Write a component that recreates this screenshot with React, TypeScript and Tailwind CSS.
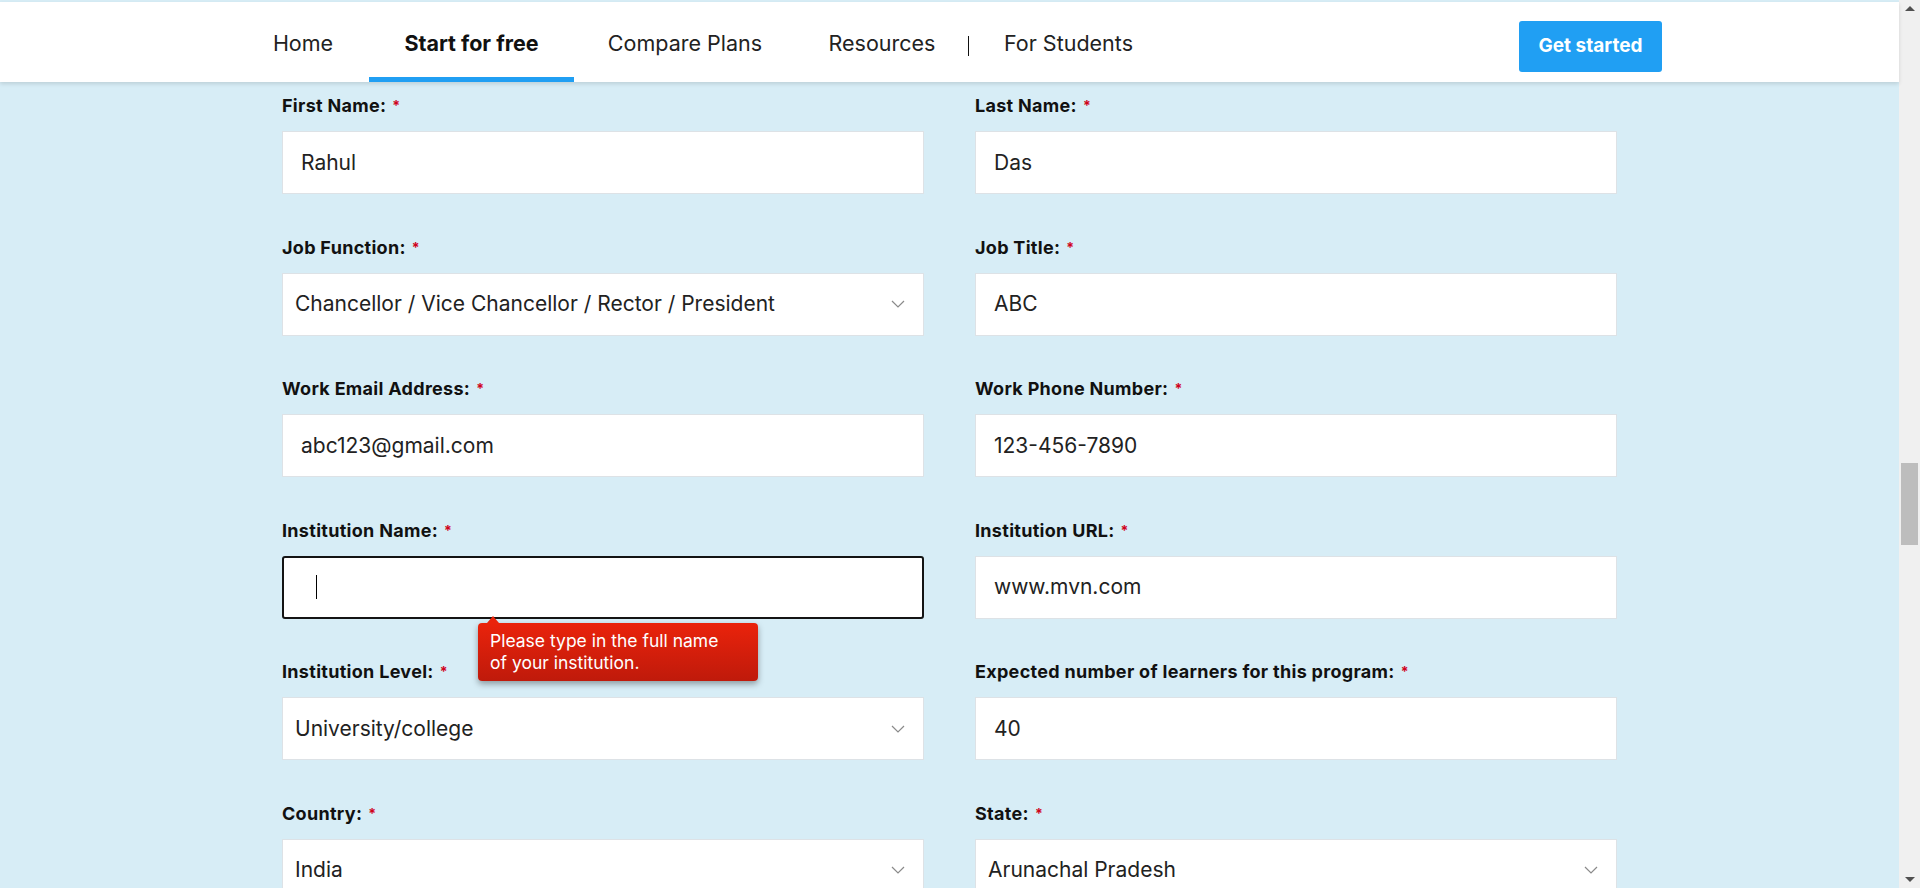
import React from "react";

const Chevron = () => (
  <svg width="14" height="8" viewBox="0 0 14 8" fill="none">
    <path d="M1 1l6 6 6-6" stroke="#8a8a8a" strokeWidth="1.2" />
  </svg>
);

function Label({ text }: { text: string }) {
  return (
    <div className="h-[24px] leading-[24px] text-[18px] tracking-[0.3px] font-bold text-[#111] mb-[13px] whitespace-nowrap">
      {text}
      <span className="text-[#d0021b] text-[14px] ml-[6px] align-[1px]">*</span>
    </div>
  );
}

function TextField({ label, value }: { label: string; value: string }) {
  return (
    <div className="mb-[41.5px]">
      <Label text={label} />
      <div className="h-[63px] bg-white border border-[#dde2e6] flex items-center pl-[18px] text-[21px] text-[#222]">
        {value}
      </div>
    </div>
  );
}

function SelectField({ label, value }: { label: string; value: string }) {
  return (
    <div className="mb-[41.5px]">
      <Label text={label} />
      <div className="h-[63px] bg-white border border-[#dde2e6] flex items-center justify-between pl-[12px] pr-[18px] text-[21px] text-[#222]">
        <span>{value}</span>
        <Chevron />
      </div>
    </div>
  );
}

function FocusedField({ label }: { label: string }) {
  return (
    <div className="mb-[41.5px]">
      <Label text={label} />
      <div className="relative h-[63px]">
        <div className="h-full bg-white border-2 border-[#141414] rounded-[3px] flex items-center">
          <div className="w-px h-[24px] bg-black ml-[32px]" />
        </div>
        <div className="absolute left-[196px] top-[67px] w-[280px] h-[58px] rounded-[4px] bg-linear-to-b from-[#ea230b] to-[#bf1a0b] shadow-[0_3px_6px_rgba(0,0,0,0.35)] text-white text-[17.5px] leading-[22px] pl-[12px] pt-[7px] z-10 whitespace-nowrap">
          <div className="absolute left-[9px] top-[-7px] w-0 h-0 border-l-[6px] border-r-[6px] border-b-[7px] border-l-transparent border-r-transparent border-b-[#ea230b]" />
          Please type in the full name
          <br />
          of your institution.
        </div>
      </div>
    </div>
  );
}

export default function App() {
  return (
    <div className="w-[1920px] h-[888px] overflow-hidden flex bg-[#d7edf6] font-['Inter','Noto_Sans',sans-serif]">
      <div className="flex-1 flex flex-col min-w-0">
        <div className="h-[2px] shrink-0" />
        <header className="h-[80px] shrink-0 bg-white flex px-[237px] shadow-[0_2px_4px_rgba(0,0,0,0.12)] relative z-20">
          <nav className="flex h-full text-[21.5px] text-[#222]">
            <a className="w-[132px] h-full flex items-center justify-center pt-[7px] border-b-[5px] border-transparent">Home</a>
            <a className="w-[205px] h-full flex items-center justify-center pt-[7px] border-b-[5px] border-[#209ff3] font-bold text-[#111]">Start for free</a>
            <a className="w-[222px] h-full flex items-center justify-center pt-[7px] border-b-[5px] border-transparent">Compare Plans</a>
            <a className="w-[172px] h-full flex items-center justify-center pt-[7px] border-b-[5px] border-transparent">Resources</a>
            <div className="w-px h-[20px] bg-[#111] self-center mt-[7px]" />
            <a className="w-[199px] h-full flex items-center justify-center pt-[7px] border-b-[5px] border-transparent">For Students</a>
          </nav>
          <button className="ml-auto mt-[19px] w-[143px] h-[51px] bg-[#209ff3] rounded-[3px] text-white font-bold text-[19px]">
            Get started
          </button>
        </header>
        <main className="w-[1335px] shrink-0 mx-auto grid grid-cols-2 gap-x-[51px] pt-[12px]">
          <TextField label="First Name:" value="Rahul" />
          <TextField label="Last Name:" value="Das" />
          <SelectField label="Job Function:" value="Chancellor / Vice Chancellor / Rector / President" />
          <TextField label="Job Title:" value="ABC" />
          <TextField label="Work Email Address:" value="abc123@gmail.com" />
          <TextField label="Work Phone Number:" value="123-456-7890" />
          <FocusedField label="Institution Name:" />
          <TextField label="Institution URL:" value="www.mvn.com" />
          <SelectField label="Institution Level:" value="University/college" />
          <TextField label="Expected number of learners for this program:" value="40" />
          <SelectField label="Country:" value="India" />
          <SelectField label="State:" value="Arunachal Pradesh" />
        </main>
      </div>
      <div className="w-[21px] h-full shrink-0 bg-[#f0f0f0] flex flex-col items-center">
        <div className="mt-[6px] w-0 h-0 border-l-[5px] border-r-[5px] border-b-[5px] border-l-transparent border-r-transparent border-b-[#505050]" />
        <div className="mt-[452px] w-[17px] h-[82px] bg-[#bdbdbd]" />
        <div className="mt-auto mb-[6px] w-0 h-0 border-l-[5px] border-r-[5px] border-t-[5px] border-l-transparent border-r-transparent border-t-[#505050]" />
      </div>
    </div>
  );
}
